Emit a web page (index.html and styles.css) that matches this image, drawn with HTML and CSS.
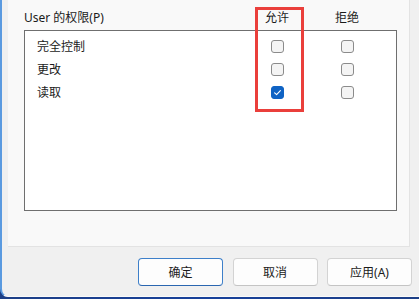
FILE: index.html
```html
<!DOCTYPE html>
<html lang="zh-CN">
<head>
<meta charset="utf-8">
<title>权限</title>
<link rel="stylesheet" href="styles.css">
</head>
<body>
<div class="window">
  <div class="panel">
    <div class="perm-head">
      <span class="perm-title">User 的权限(P)</span>
      <span class="col">允许</span>
      <span class="col">拒绝</span>
    </div>
    <div class="listbox">
      <div class="row">
        <span class="name">完全控制</span>
        <span class="col"><span class="cb"></span></span>
        <span class="col"><span class="cb"></span></span>
      </div>
      <div class="row">
        <span class="name">更改</span>
        <span class="col"><span class="cb"></span></span>
        <span class="col"><span class="cb"></span></span>
      </div>
      <div class="row">
        <span class="name">读取</span>
        <span class="col"><span class="cb checked"><svg viewBox="0 0 13 13" width="13" height="13"><path d="M3.6 6.8 L5.6 8.6 L9.4 4.6" fill="none" stroke="#ffffff" stroke-width="1.1" stroke-linecap="round" stroke-linejoin="round"/></svg></span></span>
        <span class="col"><span class="cb"></span></span>
      </div>
    </div>
    <div class="highlight"></div>
  </div>
  <div class="buttons">
    <button class="btn default">确定</button>
    <button class="btn">取消</button>
    <button class="btn">应用(A)</button>
  </div>
</div>
</body>
</html>
```
FILE: styles.css
```css
html, body {
  margin: 0;
  padding: 0;
}
body {
  width: 419px;
  height: 299px;
  overflow: hidden;
  background: linear-gradient(90deg, #1d3f86 0%, #17409a 50%, #1d3f86 100%);
  font-family: "Noto Sans", "Noto Sans CJK SC", sans-serif;
  font-size: 12px;
  color: #1b1b1b;
}
.window {
  box-sizing: border-box;
  width: 419px;
  height: 297px;
  background: #f0f0f0;
  border-left: 2px solid #5a9ae0;
  border-bottom: 1px solid #fafafa;
  border-bottom-left-radius: 8px;
  padding: 0 7px 0 6px;
  display: flex;
  flex-direction: column;
}
.panel {
  position: relative;
  box-sizing: border-box;
  width: 402px;
  height: 247px;
  background: #f9f9f9;
  border-right: 1px solid #e3e3e3;
  border-bottom: 1px solid #e3e3e3;
  padding: 10px 0 0 16px;
}
.perm-head {
  display: flex;
  width: 373px;
  box-sizing: border-box;
  padding-right: 15px;
  height: 16px;
  line-height: 16px;
}
.perm-title {
  flex: 1;
}
.col {
  width: 70px;
  display: flex;
  justify-content: center;
  align-items: center;
}
.listbox {
  box-sizing: border-box;
  margin-top: 4px;
  width: 373px;
  height: 181px;
  background: #ffffff;
  border: 1px solid #6f6f6f;
  padding: 4px 14px 0 0;
}
.row {
  display: flex;
  height: 23px;
  line-height: 23px;
}
.name {
  flex: 1;
  padding-left: 12px;
}
.cb {
  box-sizing: border-box;
  width: 13px;
  height: 13px;
  border: 1px solid #8b8b8b;
  border-radius: 3px;
  background: #f4f4f4;
  display: block;
}
.cb.checked {
  background: #0f63c4;
  border-color: #0f63c4;
}
.cb svg {
  display: block;
  margin: -1px;
}
.highlight {
  position: absolute;
  left: 247px;
  top: 7px;
  width: 49px;
  height: 105px;
  box-sizing: border-box;
  border: 3px solid #ea3f3b;
}
.buttons {
  display: flex;
  justify-content: flex-end;
  gap: 9.5px;
  margin-top: 11px;
}
.btn {
  box-sizing: border-box;
  width: 85px;
  height: 28px;
  padding: 0;
  background: #fdfdfd;
  border: 1px solid #d3d3d3;
  border-bottom-color: #c4c4c4;
  border-radius: 4px;
  font-family: "Noto Sans", "Noto Sans CJK SC", sans-serif;
  font-size: 12px;
  color: #1b1b1b;
}
.btn.default {
  border-color: #3d7fc9;
  border-bottom-color: #2a66b0;
}
```
